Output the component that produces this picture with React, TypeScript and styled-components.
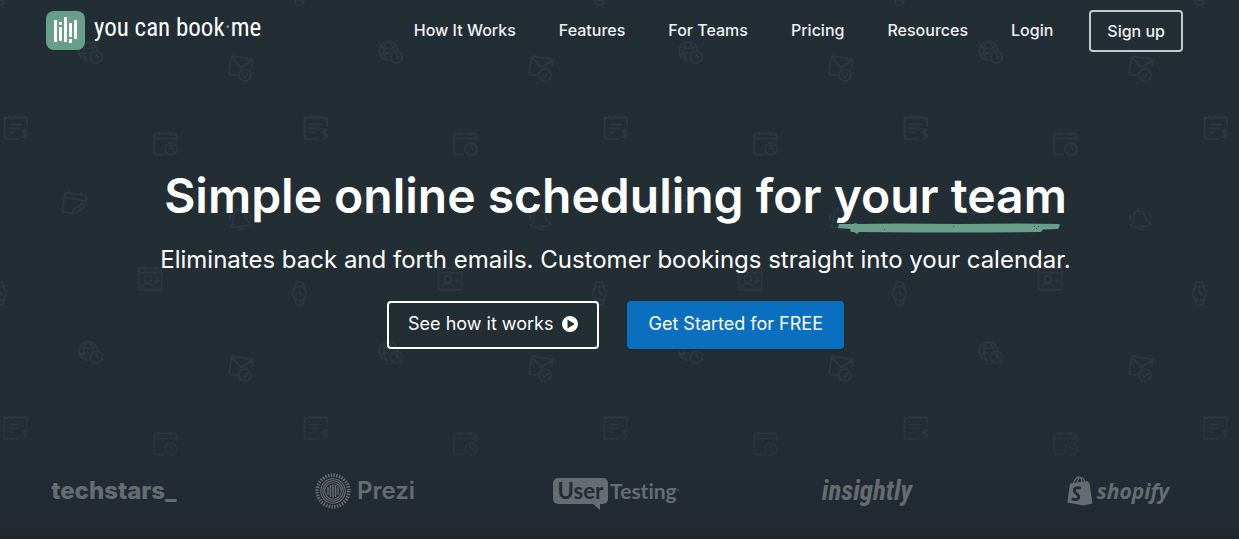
import React from "react";
import styled, { createGlobalStyle } from "styled-components";

const GlobalStyle = createGlobalStyle`
  *, *::before, *::after { box-sizing: border-box; }
  body {
    margin: 0;
    background: #232d34;
    font-family: Inter, "Liberation Sans", sans-serif;
    color: #ffffff;
  }
`;

const muted = "#666d70";
const panel = "#222c33";

const Page = styled.div`
  position: relative;
  display: flex;
  flex-direction: column;
  min-height: 100vh;
  overflow: hidden;
  background: #232d34;
`;

const Backdrop = styled.svg`
  position: absolute;
  inset: 0;
  width: 100%;
  height: 100%;
`;

const Header = styled.header`
  position: relative;
  display: flex;
  align-items: center;
  justify-content: space-between;
  padding: 10px 56px 10px 46px;
`;

const Brand = styled.a`
  display: flex;
  align-items: center;
  gap: 9px;
  padding-bottom: 2px;
  color: #ffffff;
  text-decoration: none;
`;

const BrandName = styled.span`
  font-family: "Liberation Sans Narrow", "Roboto Condensed", "DejaVu Sans Condensed", sans-serif;
  font-size: 25px;
  line-height: 36px;
  padding-bottom: 4px;
  white-space: nowrap;
`;

const Dot = styled.span`
  color: #689f8a;
`;

const Nav = styled.nav`
  display: flex;
  align-items: center;
  gap: 43px;
`;

const NavLink = styled.a`
  padding-bottom: 2px;
  font-size: 16px;
  line-height: 24px;
  font-weight: 500;
  color: #f0f1f2;
  text-decoration: none;
  white-space: nowrap;
`;

const SignUp = styled.button`
  height: 42px;
  margin-left: -7px;
  padding: 0 16px;
  border: 2px solid #c3c9cc;
  border-radius: 4px;
  background: transparent;
  color: #f0f1f2;
  font: 500 16px/24px Inter, sans-serif;
  white-space: nowrap;
`;

const Hero = styled.main`
  position: relative;
  display: flex;
  flex-direction: column;
  align-items: center;
  padding: 104px 8px 0 0;
  text-align: center;
`;

const Title = styled.h1`
  margin: 0;
  font-size: 48px;
  line-height: 60px;
  font-weight: 600;
`;

const Marked = styled.span`
  position: relative;
  display: inline-block;
`;

const Brush = styled.svg`
  position: absolute;
  left: 4px;
  top: 57px;
  width: 223px;
  height: 12px;
`;

const Subtitle = styled.p`
  margin: 16px 0 23px;
  font-size: 24px;
  line-height: 36px;
`;

const Actions = styled.div`
  display: flex;
  gap: 28px;
`;

const ActionButton = styled.button<{ $primary?: boolean }>`
  display: flex;
  align-items: center;
  gap: 9px;
  height: 48px;
  padding: 0 19px 2px;
  border: 2px solid ${(p) => (p.$primary ? "#0b6fc0" : "#ffffff")};
  border-radius: 4px;
  background: ${(p) => (p.$primary ? "#0b6fc0" : "transparent")};
  box-shadow: ${(p) => (p.$primary ? "0 1px 2px #1c252b" : "none")};
  color: #ffffff;
  font: 400 18px/24px Inter, sans-serif;
  white-space: nowrap;
`;

const Customers = styled.footer`
  position: relative;
  display: flex;
  justify-content: space-between;
  align-items: center;
  margin-top: auto;
  height: 137px;
  padding: 40px 57px 0 50px;
  background: linear-gradient(rgba(35, 45, 54, 0), rgba(34, 44, 53, 0.4) 40%, #222b33 72%, #21272d);
  color: ${muted};
`;

const Customer = styled.div`
  display: flex;
  flex: 0 0 128px;
  align-items: center;
  justify-content: center;
  white-space: nowrap;
`;

const Wordmark = styled.span<{ $size: number; $family?: string; $italic?: boolean; $weight?: number }>`
  font-family: ${(p) => p.$family || "Inter"}, sans-serif;
  font-size: ${(p) => p.$size}px;
  font-weight: ${(p) => p.$weight || 700};
  font-style: ${(p) => (p.$italic ? "italic" : "normal")};
  font-variant-ligatures: none;
  line-height: 32px;
`;

const Bubble = styled.span`
  position: relative;
  height: 26px;
  margin-right: 2px;
  padding: 0 5px;
  border-radius: 5px;
  background: ${muted};
  color: ${panel};
  display: flex;
  align-items: center;
`;

const BubbleTail = styled.svg`
  position: absolute;
  right: 7px;
  top: 25px;
`;

const Registered = styled.sup`
  font-size: 4px;
  line-height: 4px;
`;

const IconAndName = styled(Customer)<{ $gap: number }>`
  gap: ${(p) => p.$gap}px;
`;

function PatternBackdrop() {
  return (
    <Backdrop aria-hidden="true">
      <defs>
        <pattern id="icons" width="300" height="300" patternUnits="userSpaceOnUse">
          <g fill="none" stroke="#2c3741" strokeWidth="1.6" strokeLinecap="round" strokeLinejoin="round">
            <g transform="translate(78 41)">
              <path d="M19.5 8.5A9.3 9.3 0 1 0 10 19.3M10 .7C4.500 5 4.500 14 9 19.300M10 .7c3 2 4.500 4.500 5 7.500M2 5.500c5 2.500 11 2.500 16 0M1.500 13.500c3-1.200 6-1.500 9-1.300" />
              <circle cx="18.500" cy="16" r="6" />
              <path d="M18.500 12.800V16h2.500" />
            </g>
            <g transform="translate(228 55)">
              <path d="M9 20.500 3 19.500Q1 19 1.200 17L3.500 2.500Q4 1 6 1.200L23 4Q25 4.500 24.700 6L24 11M4 2l9 10.500L24.500 5" />
              <circle cx="17" cy="20" r="6" />
              <path d="m14.500 20 2 2 3.500-3.500" />
            </g>
            <g transform="translate(4 116)">
              <path d="M14 23H1.500Q.5 23 .5 22V.8l2.500 1.500L5.500.8 8 2.300 10.500.8 13 2.300 15.500.8 18 2.300 20.500.8 23 2.300V10M6 8.500h11M6 12.500h8M6 16.500h4M23 14.500q-4.500-.5-4 2 .2 1.500 2 1.500 2 .2 2 2-.2 2-4 1.500M21 13v10" />
            </g>
            <g transform="translate(153 132)">
              <path d="M10 22.500H3Q1 22.500 1 20.500V3.500Q1 1.500 3 1.500H21Q23.500 1.500 23.500 3.500V9M1 6.500H23.500M6.500.5v2M17.500.5v2" />
              <circle cx="18" cy="17" r="6" />
              <path d="M17.500 13.500V17h3" />
            </g>
            <g transform="translate(61 190)">
              <path d="M9 23 3 22Q1 21.500 1.200 20L3.800 4.500Q4 2.500 6 2.800L24 5.500Q26 6 25.700 8L25 11M3.200 7.500 25.200 11M8 1v3M20 3v3M11 24l2-5 8-5q2.500-.5 3 1.500 0 1-1 2l-8 5.500Z" />
            </g>
            <g transform="translate(228 207)">
              <path d="M3 18.500Q6 16 5.500 11 5.500 4.500 10 3.500 15.500 3 17 9q1 5 5 6.500Q24 18 21 18.500L5 20.500Q2 20.500 3 18.500M10 3.200V.8M10.500 21q2 3 5 0M2.500 8.500Q1 11 2 14M20.500 5q2.500 2 2.500 5" />
            </g>
            <g transform="translate(138 266)">
              <rect x=".7" y="2" width="23" height="21.500" rx="1.500" />
              <path d="M1 6.500H23.500M6 .5v3M18.500 .5v3M4 20.500q5-6 11.500 0M16.500 14.500h5M19 12v5" />
              <circle cx="9.800" cy="13" r="3.500" />
            </g>
            {[-0.5, 299.5].map((x) =>
              [293.5, -6.5].map((y) => (
                <g key={`${x}:${y}`} transform={`translate(${x} ${y})`}>
                  <circle r="7" />
                  <path d="M0-3V0l2.500 1M-5-5-3.500-10.500Q-3-11.500-2-11.500H2Q3-11.500 3.500-10.500L5-5M-5 5-3.500 10.500Q-3 11.500-2 11.500H2Q3 11.500 3.500 10.500L5 5" />
                </g>
              ))
            )}
          </g>
        </pattern>
      </defs>
      <rect width="100%" height="100%" fill="url(#icons)" />
    </Backdrop>
  );
}

function BrandIcon() {
  return (
    <svg width="39" height="39" viewBox="0 0 39 39" aria-hidden="true">
      <rect width="39" height="39" rx="8" fill="#689f8a" />
      <path
        fill="#ffffff"
        d="M8 9h3v22H8zM13 11h3v3h-3zM13 16h3v14h-3zM18 6h3v25h-3zM23 12h3v14h-3zM23 28h3v4h-3zM28 9h3v19h-3z"
      />
    </svg>
  );
}

function PreziIcon() {
  return (
    <svg width="36" height="36" viewBox="-18 -18 36 36" fill="none" stroke={muted} aria-hidden="true">
      <circle r="15.800" strokeWidth="3.600" strokeDasharray="1.450 1.308" />
      <circle r="12.200" strokeWidth="1.100" />
      <circle r="10.200" strokeWidth="1.100" />
      <circle r="8.200" strokeWidth="1.100" />
      <path strokeWidth="1.400" d="M-5-4v8M-2.500-6v12M0-6.500v13M2.500-6v12M5-4v8" />
    </svg>
  );
}

function ShopifyIcon() {
  return (
    <svg width="26" height="30" viewBox="0 0 26 30" aria-hidden="true">
      <path fill={muted} d="M3 7.500 20 5l2.500 2.300 3 20.200-9 2L.3 26.500Z" />
      <path fill="none" stroke={muted} strokeWidth="1.200" d="M6.500 8C7 4 9.500 1 12 1.200 14.500 1.500 15 4 15 7M10 7c.5-3.500 2-5.500 4-5.500 2.500 0 3.500 2 3.700 5" />
      <path fill="none" stroke={panel} strokeWidth="2.800" d="M13.800 12.500C10 10.500 7 12.500 7.300 15c.3 2.500 4.700 3 4.500 6-.2 2.800-3.800 3.500-7 1.300" />
    </svg>
  );
}

const links = ["How It Works", "Features", "For Teams", "Pricing", "Resources", "Login"];

export default function App() {
  return (
    <Page>
      <GlobalStyle />
      <PatternBackdrop />
      <Header>
        <Brand href="#">
          <BrandIcon />
          <BrandName>
            you can book<Dot>·</Dot>me
          </BrandName>
        </Brand>
        <Nav>
          {links.map((label) => (
            <NavLink key={label} href="#">
              {label}
            </NavLink>
          ))}
          <SignUp type="button">Sign up</SignUp>
        </Nav>
      </Header>
      <Hero>
        <Title>
          Simple online scheduling for{" "}
          <Marked>
            your team
            <Brush viewBox="0 0 223 12" preserveAspectRatio="none" aria-hidden="true">
              <path
                fill="#689f8a"
                d="M1 1 15 1 17 0 20 1 60 .5 120 1 180 .5 221 1 222 2 220 6 205 6.500 203 9 150 9.500 80 9.500 21 9 19 11 16 9 13 9 12 6 0 5Z"
              />
              <path fill="#37584f" d="M196 3h1v1h-1zM198 5h1v1h-1zM200 3h1v1h-1zM115 3h1v1h-1zM46 6h1v1h-1z" />
            </Brush>
          </Marked>
        </Title>
        <Subtitle>Eliminates back and forth emails. Customer bookings straight into your calendar.</Subtitle>
        <Actions>
          <ActionButton type="button">
            See how it works
            <svg width="16" height="16" viewBox="0 0 16 16" aria-hidden="true">
              <path
                fill="#ffffff"
                fillRule="evenodd"
                d="M8 0a8 8 0 1 0 0 16A8 8 0 0 0 8 0M5.500 4.300Q5.500 3.600 6.200 4L12 7.500Q12.600 8 12 8.500L6.200 12Q5.500 12.400 5.500 11.700Z"
              />
            </svg>
          </ActionButton>
          <ActionButton type="button" $primary>
            Get Started for FREE
          </ActionButton>
        </Actions>
      </Hero>
      <Customers>
        <Customer>
          <Wordmark $size={24} $weight={800}>techstars_</Wordmark>
        </Customer>
        <IconAndName $gap={6}>
          <PreziIcon />
          <Wordmark $size={24} $weight={600}>Prezi</Wordmark>
        </IconAndName>
        <Customer>
          <Bubble>
            <Wordmark $size={22} $family="Lato">User</Wordmark>
            <BubbleTail width="9" height="7" viewBox="0 0 9 7" aria-hidden="true">
              <path fill={muted} d="M0 0H8V7Z" />
            </BubbleTail>
          </Bubble>
          <Wordmark $size={21} $family="Lato">Testing</Wordmark>
          <Registered>®</Registered>
        </Customer>
        <Customer>
          <Wordmark $size={27} $family={'"Roboto Condensed"'} $italic>insightly</Wordmark>
        </Customer>
        <IconAndName $gap={4}>
          <ShopifyIcon />
          <Wordmark $size={21} $family={'"Open Sans"'} $italic>shopify</Wordmark>
        </IconAndName>
      </Customers>
    </Page>
  );
}
